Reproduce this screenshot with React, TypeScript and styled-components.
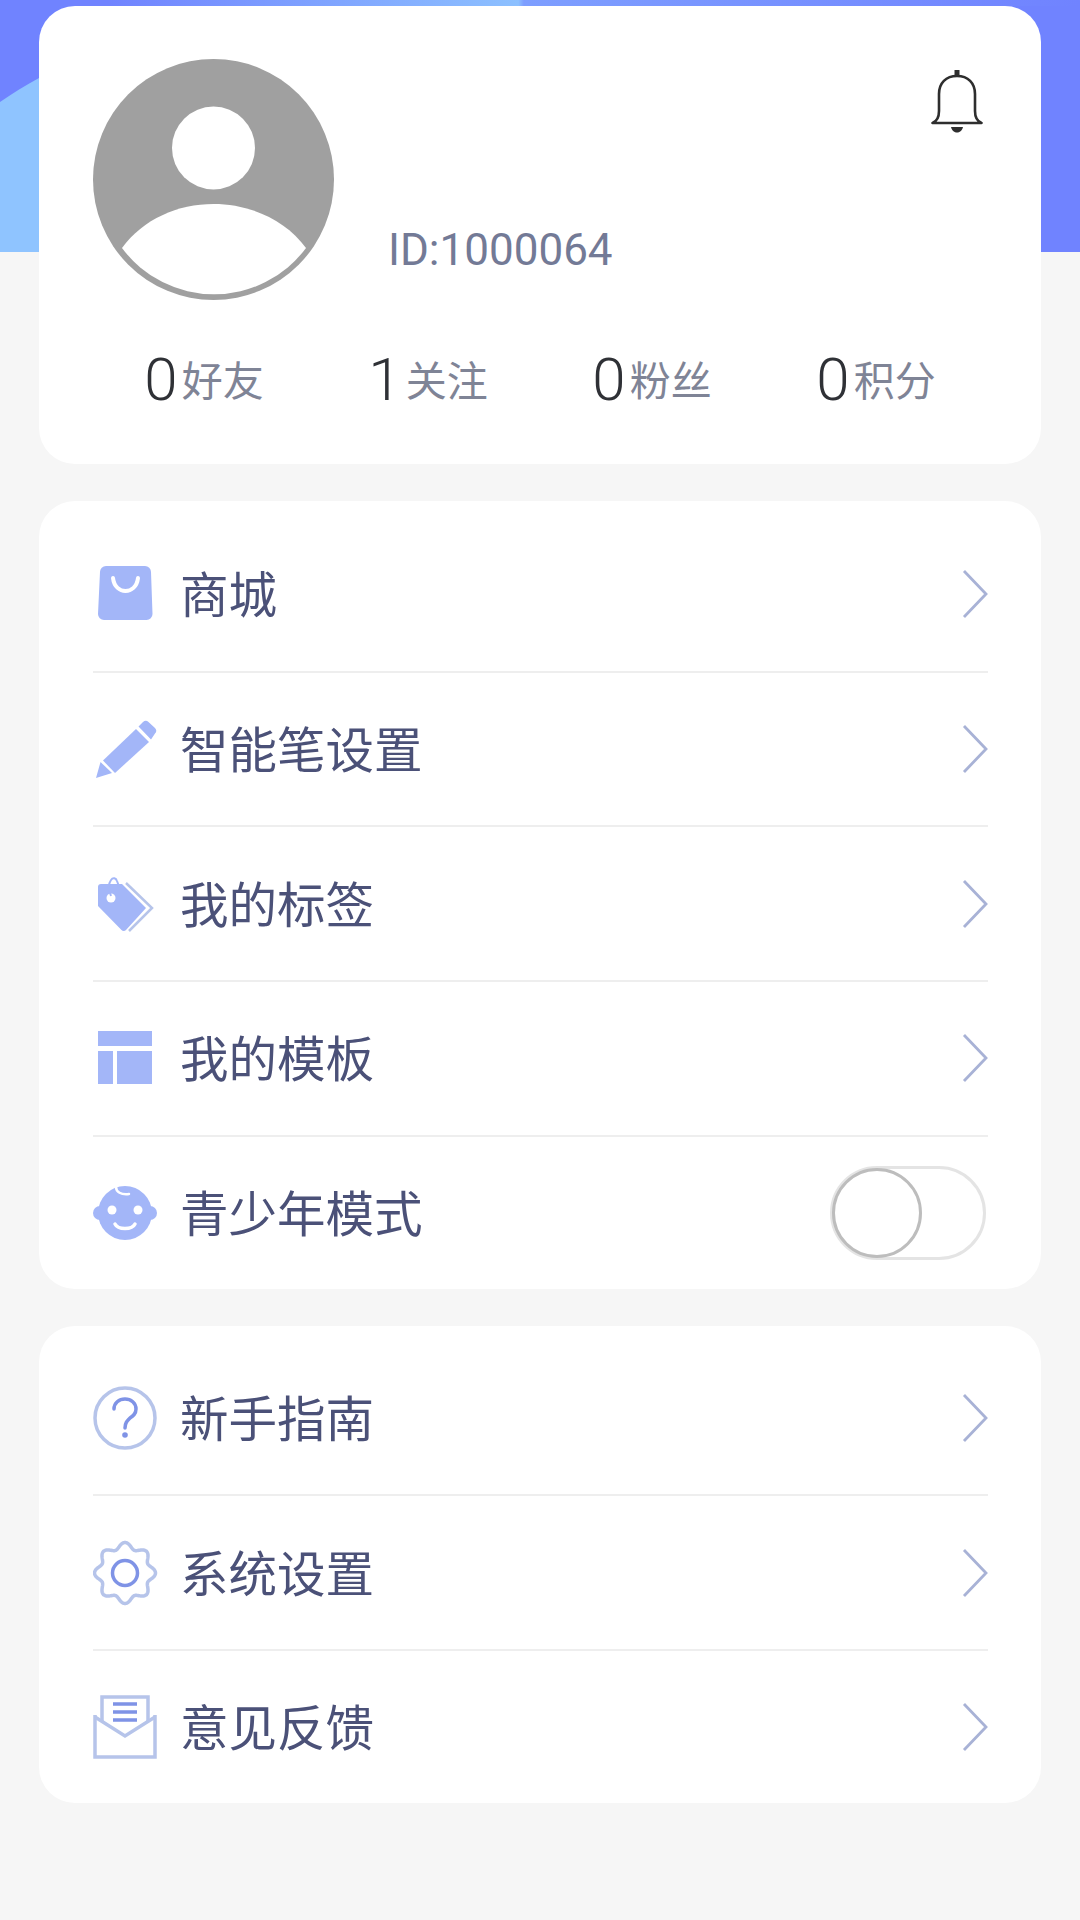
import React from "react";
import styled, { createGlobalStyle } from "styled-components";

const Global = createGlobalStyle`
  html, body { margin: 0; padding: 0; background: #f6f6f6; }
  body { font-family: "Noto Sans CJK SC", "Noto Sans", sans-serif; }
`;

const Page = styled.div`
  width: 1080px;
  height: 1920px;
  overflow: hidden;
  background: #f6f6f6;
`;

const Header = styled.svg`
  display: block;
  width: 1080px;
  height: 252px;
  margin-bottom: -246px;
`;

const Content = styled.div`
  display: flex;
  flex-direction: column;
  gap: 37px;
  padding: 0 39px;
  position: relative;
`;

const Card = styled.section`
  background: #fff;
  border-radius: 36px;
  display: flex;
  flex-direction: column;
`;

const ProfileCard = styled(Card)`
  height: 458px;
  padding: 53px 54px 0 54px;
  box-sizing: border-box;
  position: relative;
`;

const ProfileTop = styled.div`
  display: flex;
  align-items: flex-end;
  gap: 54px;
`;

const AvatarWrap = styled.svg`
  width: 241px;
  height: 241px;
  display: block;
  flex: none;
`;

const UserId = styled.div`
  font-family: "Roboto", sans-serif;
  font-size: 44px;
  line-height: 48px;
  color: #737a96;
  padding-bottom: 26px;
`;

const Bell = styled.svg`
  position: absolute;
  top: 64px;
  right: 58px;
  width: 52px;
  height: 63px;
`;

const Stats = styled.div`
  display: grid;
  grid-template-columns: repeat(4, 224px);
  margin: 45px 0 0 -1px;
`;

const Stat = styled.div`
  display: flex;
  justify-content: center;
  align-items: center;
  gap: 4px;
`;

const StatNum = styled.span`
  font-family: "Roboto", sans-serif;
  font-size: 60px;
  line-height: 66px;
  color: #2f3136;
  font-weight: 300;
  position: relative;
  top: 2px;
`;

const StatLabel = styled.span`
  font-size: 41px;
  line-height: 66px;
  color: #7f8496;
`;

const MenuCard = styled(Card)<{ $top: number }>`
  padding: ${(p) => p.$top}px 53px 0 54px;
`;

const Row = styled.div<{ $last?: boolean }>`
  display: flex;
  align-items: center;
  box-sizing: border-box;
  height: ${(p) => (p.$last ? 152 : 154.7)}px;
  border-bottom: ${(p) => (p.$last ? "none" : "2px solid #eeeeee")};
`;

const IconSlot = styled.svg`
  width: 66px;
  height: 66px;
  flex: none;
  display: block;
`;

const RowLabel = styled.span`
  margin-left: 21px;
  flex: 1;
  font-size: 48.500px;
  line-height: 60px;
  color: #4b5178;
  position: relative;
  top: -2px;
`;

const Chevron = styled.svg`
  width: 26px;
  height: 50px;
  flex: none;
  display: block;
`;

const Toggle = styled.div`
  width: 156px;
  height: 94px;
  box-sizing: border-box;
  border: 3px solid #e4e4e4;
  border-radius: 47px;
  position: relative;
  flex: none;
  margin-right: 2px;
`;

const Knob = styled.div`
  position: absolute;
  left: -1px;
  top: -1px;
  width: 90px;
  height: 90px;
  box-sizing: border-box;
  border-radius: 50%;
  border: 3px solid #bdbdbd;
  background: #fff;
`;

const FILL = "#a3b6f8";
const LINE = "#b6c4ea";
const INNER = "#7f93e6";

const ShopIcon = () => (
  <IconSlot viewBox="0 0 66 66">
    <path
      fill={FILL}
      d="M13 5h39a6 6 0 0 1 6 6l1.500 42a6 6 0 0 1-6 6H11a6 6 0 0 1-6-6l2-42a6 6 0 0 1 6-6z"
    />
    <path fill="none" stroke="#fff" strokeWidth="4" strokeLinecap="round" d="M20 17c1 9 7 13 12.500 13s11.500-4 12.500-13" />
  </IconSlot>
);

const PenIcon = () => (
  <IconSlot viewBox="0 0 66 66">
    <path fill={FILL} d="M3 62l4.500-16 11.500 11z" />
    <path fill={FILL} d="M10 44.500L43 13l13 13-34 31z" />
    <path fill={FILL} d="M45.500 10.500L50 6a4 4 0 0 1 5.500 0L62 12a4 4 0 0 1 0 5.500L58 23.500z" />
  </IconSlot>
);

const TagIcon = () => (
  <IconSlot viewBox="0 0 66 66">
    <path fill="none" stroke={LINE} strokeWidth="2.500" d="M33 12l26 25-23 23" />
    <path fill={FILL} d="M8 13h21l24 24-20 22a3 3 0 0 1-4.500 0L5 35V16a3 3 0 0 1 3-3z" />
    <circle cx="18" cy="27" r="4.500" fill="#fff" />
    <path fill="none" stroke={FILL} strokeWidth="2" d="M18 25c-2-5-3-12 0-16 2-3 5-2 6 1l3 8" />
  </IconSlot>
);

const TemplateIcon = () => (
  <IconSlot viewBox="0 0 66 66">
    <path fill={FILL} d="M5 6h54v15H5zM5 26h15v33H5zM24 26h35v33H24z" />
  </IconSlot>
);

const BabyIcon = () => (
  <IconSlot viewBox="0 0 66 66">
    <circle cx="32" cy="33" r="27" fill={FILL} />
    <circle cx="7" cy="33" r="7" fill={FILL} />
    <circle cx="57" cy="33" r="7" fill={FILL} />
    <circle cx="19" cy="30" r="4.500" fill="#fff" />
    <circle cx="45" cy="30" r="4.500" fill="#fff" />
    <path fill="none" stroke="#fff" strokeWidth="3.500" strokeLinecap="round" d="M22 44c3 6 17 6 20 0" />
    <path fill="none" stroke="#fff" strokeWidth="2.500" strokeLinecap="round" d="M23 7c0 5 5 8 13 7" />
  </IconSlot>
);

const HelpIcon = () => (
  <IconSlot viewBox="0 0 66 66">
    <circle cx="32" cy="33" r="30" fill="none" stroke={LINE} strokeWidth="3.500" />
    <path
      fill="none"
      stroke={INNER}
      strokeWidth="3.500"
      strokeLinecap="round"
      d="M21 24c0-6 5-10 11-10s11 4 11 10c0 5-3 7-6 9-3 3-5 5-5 10"
    />
    <circle cx="32" cy="50" r="2.800" fill={INNER} />
  </IconSlot>
);

const gearPath = (() => {
  const pts: string[] = [];
  for (let i = 0; i < 240; i++) {
    const a = (i / 240) * Math.PI * 2;
    const r = 27.5 + 3 * Math.cos(8 * a);
    const x = 32 + r * Math.sin(a);
    const y = 33 - r * Math.cos(a);
    pts.push(`${x.toFixed(2)} ${y.toFixed(2)}`);
  }
  return `M${pts.join("L")}z`;
})();

const GearIcon = () => (
  <IconSlot viewBox="0 0 66 66">
    <path fill="none" stroke={LINE} strokeWidth="3.500" strokeLinejoin="round" d={gearPath} />
    <circle cx="32" cy="33" r="12.500" fill="none" stroke={INNER} strokeWidth="3.500" />
  </IconSlot>
);

const MailIcon = () => (
  <IconSlot viewBox="0 0 66 66">
    <path fill="none" stroke={LINE} strokeWidth="3.500" d="M2 21v42h60V21" />
    <path fill="none" stroke={LINE} strokeWidth="3.500" d="M2 23l30 19 30-19" />
    <path fill="none" stroke={LINE} strokeWidth="3.500" d="M9 28V3h46v25" />
    <path fill="none" stroke={INNER} strokeWidth="3.500" d="M20 10h24M20 18h24M20 26h24" />
  </IconSlot>
);

const RightArrow = () => (
  <Chevron viewBox="0 0 26 50">
    <path fill="none" stroke="#a8b2d6" strokeWidth="2.800" d="M2 2l22 23L2 48" />
  </Chevron>
);

type Item = { label: string; icon: React.ReactNode; toggle?: boolean };

const shop: Item[] = [
  { label: "商城", icon: <ShopIcon /> },
  { label: "智能笔设置", icon: <PenIcon /> },
  { label: "我的标签", icon: <TagIcon /> },
  { label: "我的模板", icon: <TemplateIcon /> },
  { label: "青少年模式", icon: <BabyIcon />, toggle: true },
];

const support: Item[] = [
  { label: "新手指南", icon: <HelpIcon /> },
  { label: "系统设置", icon: <GearIcon /> },
  { label: "意见反馈", icon: <MailIcon /> },
];

const stats = [
  { n: "0", l: "好友" },
  { n: "1", l: "关注" },
  { n: "0", l: "粉丝" },
  { n: "0", l: "积分" },
];

const Menu = ({ items, top }: { items: Item[]; top: number }) => (
  <MenuCard $top={top}>
    {items.map((it, i) => (
      <Row key={it.label} $last={i === items.length - 1}>
        {it.icon}
        <RowLabel>{it.label}</RowLabel>
        {it.toggle ? (
          <Toggle>
            <Knob />
          </Toggle>
        ) : (
          <RightArrow />
        )}
      </Row>
    ))}
  </MenuCard>
);

export default function App() {
  return (
    <Page>
      <Global />
      <Header viewBox="0 0 1080 252">
        <defs>
          <linearGradient id="strip" x1="0" x2="1" y1="0" y2="0">
            <stop offset="0" stopColor="#7083ff" />
            <stop offset="0.1" stopColor="#7083ff" />
            <stop offset="0.48" stopColor="#8cc0ff" />
            <stop offset="0.485" stopColor="#7d9eff" />
            <stop offset="1" stopColor="#7083ff" />
          </linearGradient>
        </defs>
        <rect width="1080" height="252" fill="#7083ff" />
        <rect width="1080" height="6" fill="url(#strip)" />
        <path fill="#8fc4ff" d="M0 102C13 93 26 85 39 78h10v174H0z" />
      </Header>
      <Content>
        <ProfileCard>
          <ProfileTop>
            <AvatarWrap viewBox="0 0 241 241">
              <circle cx="120.500" cy="120.500" r="120.500" fill="#a0a0a0" />
              <circle cx="120.500" cy="89" r="41.500" fill="#fff" />
              <path
                fill="#fff"
                d="M29 189C50 160 85 145 120.500 145S192 160 213 189A114.500 114.500 0 0 1 29 189z"
              />
            </AvatarWrap>
            <UserId>ID:1000064</UserId>
          </ProfileTop>
          <Bell viewBox="0 0 52 63">
            <path fill="#2e2e2e" d="M23.500 0h5v7h-5z" />
            <path
              fill="none"
              stroke="#2e2e2e"
              strokeWidth="2.600"
              strokeLinejoin="round"
              d="M1.500 53c5-2 6.500-6 6.500-12V24C8 13 15 6 26 6s18 7 18 18v17c0 6 1.500 10 6.500 12z"
            />
            <path fill="#2e2e2e" d="M20 57h12c-1 4-3.500 5.500-6 5.500s-5-1.500-6-5.500z" />
          </Bell>
          <Stats>
            {stats.map((s) => (
              <Stat key={s.l}>
                <StatNum>{s.n}</StatNum>
                <StatLabel>{s.l}</StatLabel>
              </Stat>
            ))}
          </Stats>
        </ProfileCard>
        <Menu items={shop} top={17} />
        <Menu items={support} top={16} />
      </Content>
    </Page>
  );
}
